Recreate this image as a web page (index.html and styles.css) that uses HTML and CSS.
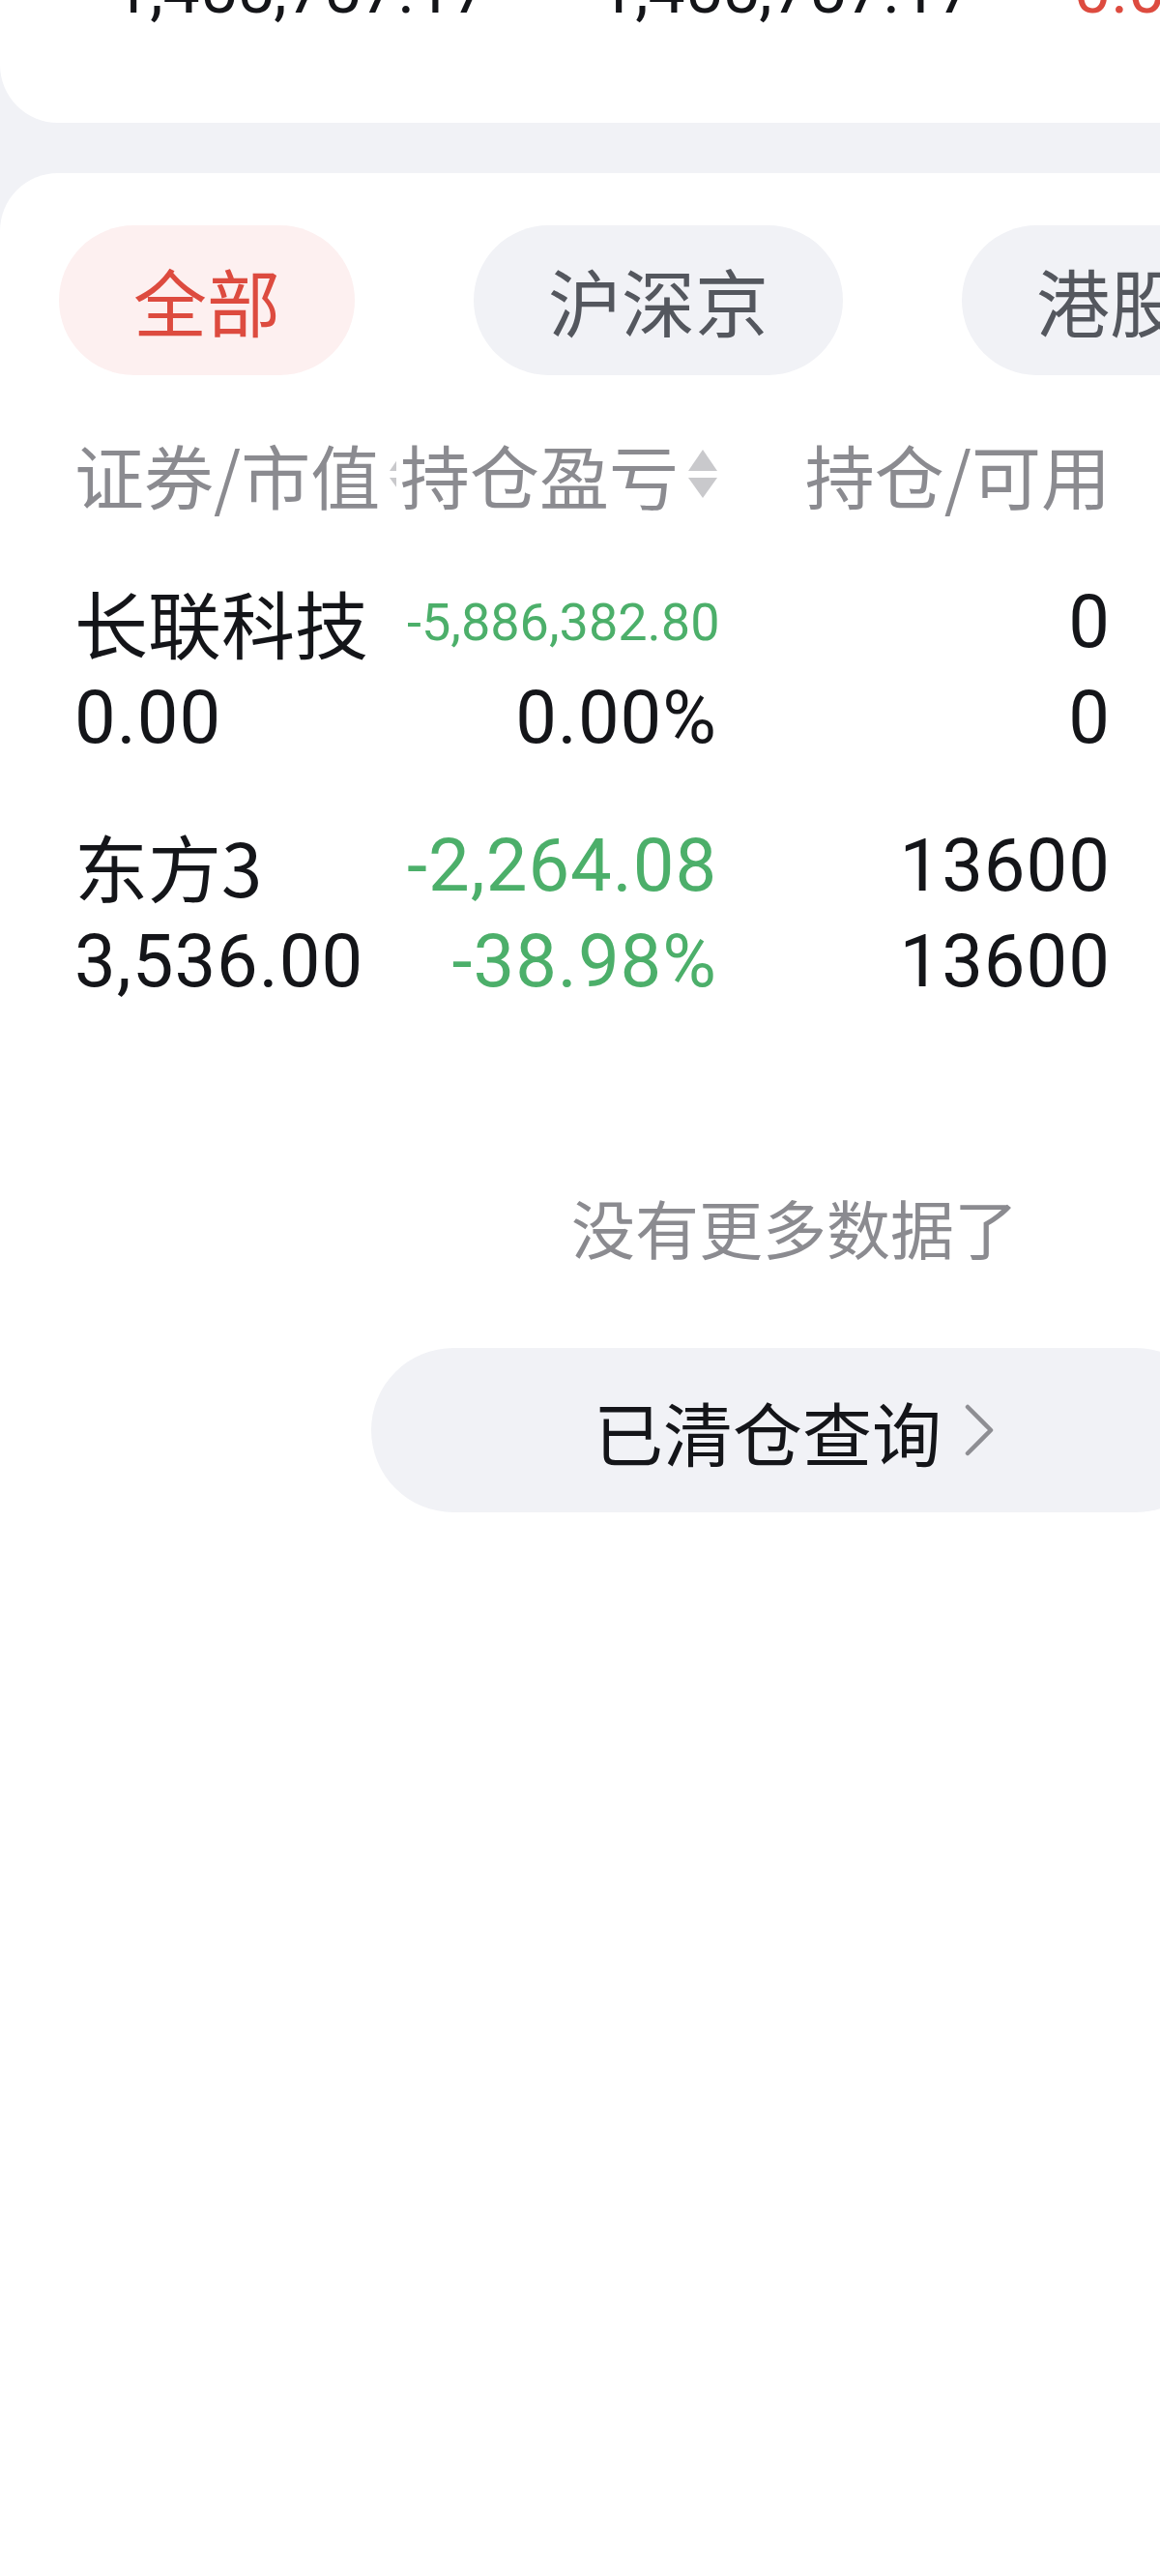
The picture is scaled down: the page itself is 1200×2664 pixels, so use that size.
FILE: index.html
```html
<!DOCTYPE html>
<html lang="zh-CN">
<head>
  <meta charset="UTF-8">
  <meta name="viewport" content="width=device-width, initial-scale=1.0">
  <title>持仓</title>
  <link rel="stylesheet" href="styles.css">
</head>
<body>
  <div class="summary">
    <div class="summary-values">
      <span class="num">1,455,757.17</span>
      <span class="num">1,455,757.17</span>
      <span class="num up">0.00</span>
    </div>
  </div>

  <div class="holdings">
    <div class="tabs">
      <div class="tab active">全部</div>
      <div class="tab">沪深京</div>
      <div class="tab">港股</div>
      <div class="tab">美股</div>
    </div>

    <div class="table">
      <div class="thead">
        <div class="th th-name">证券/市值<svg class="sort" viewBox="0 0 30 50"><path d="M15 0 L30 22 L0 22 Z"/><path d="M0 29 L30 29 L15 50 Z"/></svg></div>
        <div class="th th-right">持仓盈亏<svg class="sort" viewBox="0 0 30 50"><path d="M15 0 L30 22 L0 22 Z"/><path d="M0 29 L30 29 L15 50 Z"/></svg></div>
        <div class="th th-right">持仓/可用</div>
      </div>

      <div class="row">
        <div class="cell">
          <div class="name">长联科技</div>
          <div class="num">0.00</div>
        </div>
        <div class="cell right">
          <div class="num down small">-5,886,382.80</div>
          <div class="num">0.00%</div>
        </div>
        <div class="cell right">
          <div class="num">0</div>
          <div class="num">0</div>
        </div>
      </div>

      <div class="row">
        <div class="cell">
          <div class="name">东方3</div>
          <div class="num">3,536.00</div>
        </div>
        <div class="cell right">
          <div class="num down">-2,264.08</div>
          <div class="num down">-38.98%</div>
        </div>
        <div class="cell right">
          <div class="num">13600</div>
          <div class="num">13600</div>
        </div>
      </div>
    </div>

    <div class="no-more">没有更多数据了</div>

    <button class="cleared">已清仓查询<svg class="chevron" viewBox="0 0 34 58"><path d="M5 5 L29 29 L5 53"/></svg></button>
  </div>
</body>
</html>
```

FILE: styles.css
```css
html, body {
  margin: 0;
  overflow: hidden;
}
body {
  width: 1200px;
  background: #f1f2f6;
  font-family: "Noto Sans CJK SC", sans-serif;
  color: #141519;
}
.num {
  font-family: Roboto, "Noto Sans CJK SC", sans-serif;
}
.up {
  color: #dd4b3f;
}
.down {
  color: #4caf6a;
}

/* top summary card, only its bottom is on screen */
.summary {
  width: 1644px;
  height: 127px;
  background: #fff;
  border-radius: 0 0 0 60px;
  overflow: hidden;
}
.summary-values {
  display: grid;
  grid-template-columns: 502px 492px auto;
  padding-left: 117px;
  margin-top: -60px;
  line-height: 100px;
  font-size: 68px;
}

/* holdings card */
.holdings {
  width: 1644px;
  min-height: 2485px;
  margin-top: 52px;
  padding-top: 54px;
  box-sizing: border-box;
  background: #fff;
  border-radius: 60px 60px 0 0;
}
.tabs {
  display: flex;
  gap: 123px;
  padding-left: 61px;
}
.tab {
  height: 155px;
  line-height: 155px;
  padding: 0 77px;
  border-radius: 78px;
  background: #f1f2f6;
  color: #54575e;
  font-size: 76px;
  white-space: nowrap;
}
.tab.active {
  background: #fdf0f0;
  color: #dd4b3f;
}

.table {
  padding-left: 77px;
  margin-top: 52px;
}
.thead, .row {
  display: grid;
  grid-template-columns: 344px 321px 407px;
}
.thead {
  line-height: 100px;
  font-size: 72px;
  color: #8b8b90;
}
.th {
  display: flex;
  align-items: center;
  white-space: nowrap;
}
.th-name {
  max-width: 333px;
  overflow: hidden;
}
.th-right {
  justify-content: flex-end;
}
.sort {
  flex: none;
  width: 30px;
  height: 50px;
  margin-left: 10px;
  fill: #c9c9cc;
}
.row {
  padding-top: 54px;
}
.cell {
  line-height: 99px;
  font-size: 76px;
  white-space: nowrap;
}
.cell .num {
  letter-spacing: 1px;
}
.cell.right {
  text-align: right;
}
.cell .small {
  font-size: 54px;
  letter-spacing: 0;
}

.no-more {
  margin-top: 174px;
  line-height: 100px;
  text-align: center;
  font-size: 66px;
  color: #8b8b90;
}
.cleared {
  display: flex;
  align-items: center;
  justify-content: center;
  width: 876px;
  height: 170px;
  margin: 76px auto 0;
  padding: 0;
  border: none;
  border-radius: 85px;
  background: #f1f2f6;
  font-family: inherit;
  font-size: 72px;
  color: #141519;
}
.chevron {
  width: 34px;
  height: 58px;
  margin-left: 22px;
  fill: none;
  stroke: #8e8e93;
  stroke-width: 4.5;
  stroke-linecap: round;
  stroke-linejoin: round;
}
```
